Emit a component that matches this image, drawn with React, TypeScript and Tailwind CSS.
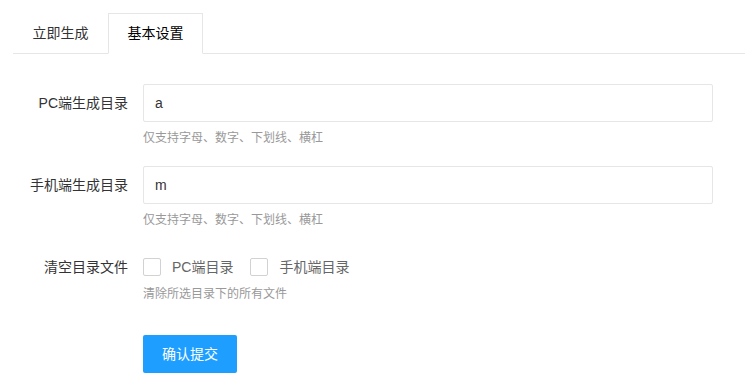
import React from "react";

const font = { fontFamily: '"Liberation Sans", "Noto Sans CJK SC", sans-serif' };

function Checkbox({ label }: { label: string }) {
  return (
    <div className="flex items-center mr-[17px]">
      <span className="w-[18px] h-[18px] border border-[#d2d2d2] rounded-[2px] bg-white box-border" />
      <span className="ml-[11px] text-[14px] text-[#666]">{label}</span>
    </div>
  );
}

function Label({ children }: { children: React.ReactNode }) {
  return (
    <div className="w-[110px] shrink-0 pr-[15px] flex justify-end whitespace-nowrap leading-[38px] h-[38px] text-[14px] text-[#333]">
      {children}
    </div>
  );
}

function InputItem({ label, value }: { label: string; value: string }) {
  return (
    <div className="flex">
      <Label>{label}</Label>
      <div className="flex-1 mr-[32px]">
        <div className="h-[38px] border border-[#e6e6e6] rounded-[2px] box-border pl-[11px] leading-[36px] text-[14px] text-[#333]">
          {value}
        </div>
        <div className="mt-[6px] leading-[20px] text-[12px] text-[#999]">仅支持字母、数字、下划线、横杠</div>
      </div>
    </div>
  );
}

export default function App() {
  return (
    <div className="w-[745px] h-[382px] bg-white pt-[13px] pl-[13px] overflow-hidden" style={font}>
      <div className="flex h-[41px] border-b border-[#e6e6e6] box-border">
        <div className="w-[95px] text-center leading-[40px] text-[14px] text-[#333]">立即生成</div>
        <div className="self-start h-[41px] w-[95px] text-center leading-[39px] text-[14px] text-[#000] border border-[#e6e6e6] border-b-white bg-white box-border">
          基本设置
        </div>
      </div>
      <div className="pl-[20px] pt-[30px]">
        <InputItem label="PC端生成目录" value="a" />
        <div className="mt-[18px]">
          <InputItem label="手机端生成目录" value="m" />
        </div>
        <div className="flex mt-[18px]">
          <Label>清空目录文件</Label>
          <div className="flex-1">
            <div className="flex items-center h-[38px]">
              <Checkbox label="PC端目录" />
              <Checkbox label="手机端目录" />
            </div>
            <div className="mt-[-2px] leading-[20px] text-[12px] text-[#999]">清除所选目录下的所有文件</div>
          </div>
        </div>
        <div className="ml-[110px] mt-[31px]">
          <button className="w-[94px] h-[38px] bg-[#1E9FFF] text-white text-[14px] rounded-[2px]">确认提交</button>
        </div>
      </div>
    </div>
  );
}
